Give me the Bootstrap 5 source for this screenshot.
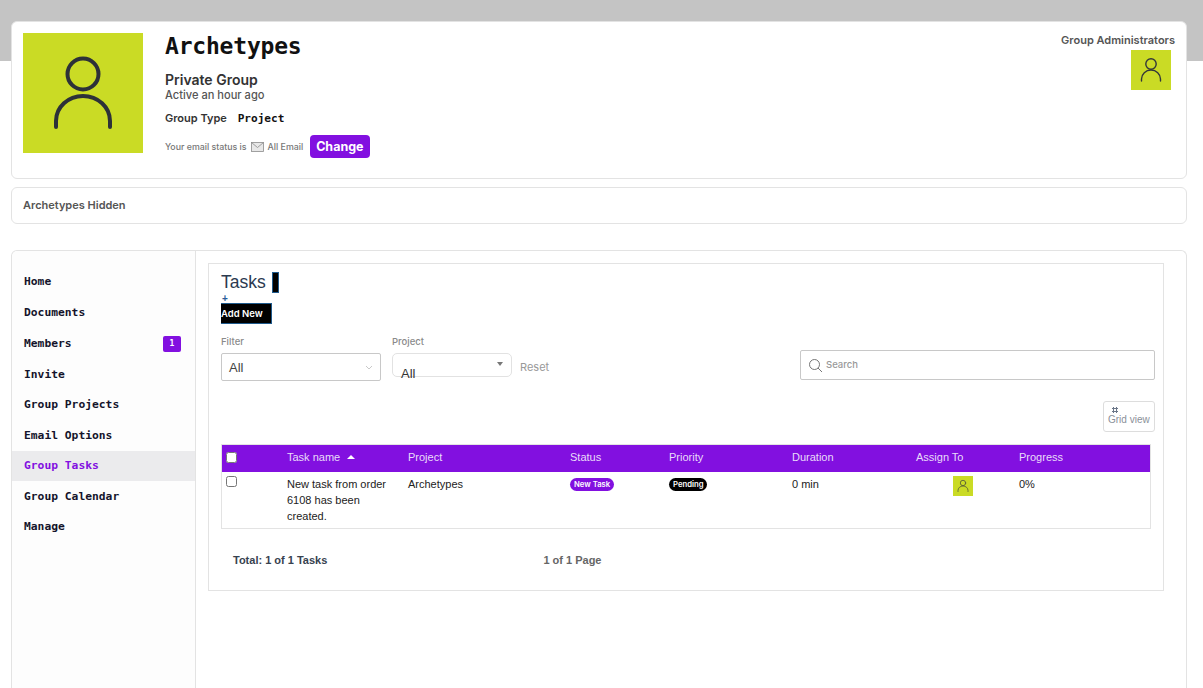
<!DOCTYPE html>
<html lang="en">
<head>
  <meta charset="UTF-8" />
  <meta name="viewport" content="width=device-width, initial-scale=1.0"/>
  <title>Archetypes Tasks</title>
  <link href="https://cdn.jsdelivr.net/npm/bootstrap@5.3.0/dist/css/bootstrap.min.css" rel="stylesheet">
  <style>
    html, body { height: 100%; }
    body { background: linear-gradient(#c4c4c4 61px, #fff 61px); font-family: "Inter", sans-serif; color: #2f2f38; overflow: hidden; }
    .page-wrap { padding: 21px 16px 0 11px; height: 688px; overflow: hidden; display: flex; flex-direction: column; }
    .box { background: #fff; border: 1px solid #e3e3e3; border-radius: 6px; }
    .head-box { flex: none; height: 158px; padding: 11px; margin-bottom: 8px; }
    .avatar-big { width: 120px; height: 120px; background: #cadb25; flex-shrink: 0; margin-right: 22px; }
    .avatar-mid { width: 40px; height: 40px; background: #cadb25; display: block; }
    .avatar-tiny { width: 20px; height: 20px; background: #cadb25; display: block; margin-left: 37px; }
    .group-title { font: 700 23px/26px "DejaVu Sans Mono", monospace; color: #111; letter-spacing: -.2px; margin: 0 0 13px; }
    .group-sub { font-size: 14px; font-weight: 600; line-height: 16px; color: #333; }
    .group-active { font-size: 11.1px; font-weight: 500; line-height: 14px; color: #555; margin-bottom: 9px; }
    .group-type { font-size: 11px; font-weight: 600; color: #333; line-height: 14px; margin-bottom: 9px; }
    .group-type span { font: 700 11.1px/14px "DejaVu Sans Mono", monospace; color: #111; margin-left: 8px; }
    .mail-line { font-size: 8.8px; font-weight: 500; color: #777; }
    .btn-change { background: #8210e0; color: #fff; font-size: 12.5px; font-weight: 700; line-height: 17px; padding: 3px 6px; border: 0; border-radius: 4px; margin-left: 7px; }
    .admins-title { font-size: 11px; font-weight: 600; color: #555; line-height: 14px; margin-bottom: 3px; }
    .hidden-box { flex: none; height: 37px; padding: 0 11px; margin-bottom: 26px; font-size: 11px; font-weight: 600; color: #555; }
    .main-box { flex: 1 0 auto; border-bottom: 0; border-radius: 6px 6px 0 0; }
    .side-col { width: 184px; flex-shrink: 0; background: #fdfdfd; border-right: 1px solid #e3e3e3; padding-top: 16px; border-top-left-radius: 6px; }
    .side-link { display: flex; justify-content: space-between; align-items: center; height: 30.4px; padding: 0 14px 0 12px; font: 700 11.3px/14px "DejaVu Sans Mono", monospace; color: #14142b; text-decoration: none; }
    .side-link.tall { height: 32px; }
    .side-link.now { background: #ebebed; color: #8210e0; }
    .side-count { background: #8210e0; color: #fff; border-radius: 2px; width: 18px; height: 16px; font-size: 8px; line-height: 16px; text-align: center; }
    .content-col { flex: 1; padding: 12px 22px 0 12px; }
    .panel-box { border: 1px solid #e3e3e3; height: 328px; padding: 6px 8px 0 12px; }
    .tasks-head { font: 400 17.5px/24px "Liberation Sans", sans-serif; color: #2b3a4f; height: 25px; }
    .black-tag { display: inline-block; width: 7px; height: 21px; background: #000; border: 1px solid #1f5a8c; vertical-align: -5px; margin-left: 1px; }
    .plus-mark { font: 700 10px/8px "Liberation Sans", sans-serif; color: #2a5c9a; height: 8px; margin-left: 1px; }
    .btn-addnew { display: block; width: 51px; height: 21px; background: #000; color: #fff; font-size: 9.5px; font-weight: 600; line-height: 19px; padding: 0; border: 1px solid #1f5a8c; border-left: 0; border-radius: 0; text-align: left; }
    .filter-row { margin-top: 12px; height: 45px; }
    .filter-label { font-size: 9.5px; font-weight: 500; line-height: 12px; color: #8a8a8a; margin-bottom: 5px; }
    .filter-gap { margin-right: 11px; }
    .pick-one { width: 160px; height: 28px; border: 1px solid #c8c8c8; border-radius: 2px; padding: 0 7px; font: 13px/27px "Liberation Sans", sans-serif; color: #444; display: flex; justify-content: space-between; }
    .pick-two { width: 120px; height: 24px; border: 1px solid #e2e2e2; border-radius: 5px; padding: 0 8px; font: 13px/40px "Liberation Sans", sans-serif; color: #333; display: flex; justify-content: space-between; }
    .pick-two i { width: 0; height: 0; border: 3px solid transparent; border-top: 4px solid #777; margin-top: 8px; }
    .reset-link { font: 11px/28px "Inter", sans-serif; color: #999; margin-left: 8px; }
    .search-box { width: 355px; height: 30px; border: 1px solid #c8c8c8; border-radius: 2px; padding: 0 7px; font-size: 9.5px; font-weight: 500; color: #999; gap: 3px; margin-bottom: 1px; }
    .grid-btn { width: 52px; height: 31px; border: 1px solid #ddd; border-radius: 3px; font: 10px/11px "Liberation Sans", sans-serif; color: #8a9099; padding: 5px 4px 0; }
    .grid-dots { display: block; width: 6px; height: 6px; margin: 0 0 1px 4px; background: radial-gradient(circle, #6b7688 1.1px, transparent 1.3px) 0 0 / 3px 3px; }
    .tool-row { margin-top: 20px; height: 43px; }
    .task-frame { width: 930px; border: 1px solid #e3e3e3; }
    .task-table { table-layout: fixed; width: 928px; margin: 0; font: 11px/16px "Liberation Sans", sans-serif; color: #222; }
    .task-table th { background: #8210e0; color: #e9dcf9; font-weight: 400; height: 27px; padding: 0 4px 3px; vertical-align: middle; border: 0; }
    .task-table td { height: 56px; padding: 4px; vertical-align: top; border: 0; color: #222; }
    .task-table input { width: 11px; height: 11px; margin: 0; display: block; }
    .sort-up { display: inline-block; width: 0; height: 0; border: 4px solid transparent; border-top: 0; border-bottom: 4px solid #fff; margin-left: 4px; vertical-align: 2px; }
    .pill-tag { display: inline-block; font: 600 7.7px/13px "Inter", sans-serif; color: #fff; border-radius: 7px; padding: 0 4px; vertical-align: top; margin-top: 2px; }
    .pill-new { background: #8210e0; }
    .pill-pending { background: #000; }
    .foot-row { font: 700 11px/14px "Liberation Sans", sans-serif; margin-top: 24px; padding-left: 12px; color: #37424f; }
    .foot-row .pages { margin-left: 213px; color: #666; }
  </style>
</head>
<body>
  <div class="page-wrap">

    <!-- Group header -->
    <div class="box head-box d-flex">
      <svg class="avatar-big" viewBox="0 0 120 120" fill="none" stroke="#2d3138" stroke-width="4" stroke-linecap="round">
        <circle cx="60" cy="41" r="15.5"/>
        <path d="M33 94V88a27 25 0 0 1 54 0v6"/>
      </svg>
      <div class="flex-grow-1">
        <h1 class="group-title">Archetypes</h1>
        <div class="group-sub">Private Group</div>
        <div class="group-active">Active an hour ago</div>
        <div class="group-type">Group Type <span>Project</span></div>
        <div class="mail-line d-flex align-items-center">
          Your email status is
          <svg class="mx-1" width="13" height="10" viewBox="0 0 13 10" fill="#e8e8e8" stroke="#8c8c8c" stroke-width=".8"><rect x=".5" y=".5" width="12" height="9"/><path d="M.5 .5l6 5 6-5" fill="none"/></svg>
          All Email
          <button class="btn btn-change" type="button">Change</button>
        </div>
      </div>
      <div class="d-flex flex-column align-items-end">
        <div class="admins-title">Group Administrators</div>
        <svg class="avatar-mid me-1" viewBox="0 0 40 40" fill="none" stroke="#33373a" stroke-width="1.4" stroke-linecap="round">
          <circle cx="20" cy="14" r="5.2"/>
          <path d="M10.5 31v-2a9.5 9 0 0 1 19 0v2"/>
        </svg>
      </div>
    </div>

    <div class="box hidden-box d-flex align-items-center">Archetypes Hidden</div>

    <!-- Sidebar and tasks -->
    <div class="box main-box d-flex">
      <nav class="side-col">
        <a class="side-link" href="#">Home</a>
        <a class="side-link" href="#">Documents</a>
        <a class="side-link tall" href="#">Members <span class="side-count">1</span></a>
        <a class="side-link" href="#">Invite</a>
        <a class="side-link" href="#">Group Projects</a>
        <a class="side-link" href="#">Email Options</a>
        <a class="side-link now" href="#">Group Tasks</a>
        <a class="side-link" href="#">Group Calendar</a>
        <a class="side-link" href="#">Manage</a>
      </nav>

      <div class="content-col">
        <div class="panel-box">
          <div class="tasks-head">Tasks <span class="black-tag"></span></div>
          <div class="plus-mark">+</div>
          <button class="btn btn-addnew" type="button">Add New</button>

          <div class="filter-row d-flex">
            <div class="filter-gap">
              <div class="filter-label">Filter</div>
              <div class="pick-one">All
                <svg width="8" height="26" viewBox="0 0 8 26" fill="none" stroke="#bbb" stroke-width=".8"><path d="M1 12l3 3 3-3"/></svg>
              </div>
            </div>
            <div>
              <div class="filter-label">Project</div>
              <div class="d-flex">
                <div class="pick-two">All<i></i></div>
                <span class="reset-link">Reset</span>
              </div>
            </div>
            <div class="search-box d-flex align-items-center ms-auto align-self-end">
              <svg width="15" height="15" viewBox="0 0 15 15" fill="none" stroke="#666" stroke-width=".9"><circle cx="6.5" cy="6.5" r="5"/><path d="M10 10l4 4"/></svg>
              Search
            </div>
          </div>

          <div class="tool-row d-flex justify-content-end">
            <div class="grid-btn"><span class="grid-dots"></span>Grid view</div>
          </div>

          <div class="task-frame">
            <table class="table task-table">
              <colgroup>
                <col style="width:61px"><col style="width:121px"><col style="width:162px"><col style="width:99px">
                <col style="width:123px"><col style="width:124px"><col style="width:103px"><col style="width:135px">
              </colgroup>
              <thead>
                <tr>
                  <th><input type="checkbox"></th>
                  <th>Task name <span class="sort-up"></span></th>
                  <th>Project</th>
                  <th>Status</th>
                  <th>Priority</th>
                  <th>Duration</th>
                  <th>Assign To</th>
                  <th>Progress</th>
                </tr>
              </thead>
              <tbody>
                <tr>
                  <td><input type="checkbox"></td>
                  <td>New task from order 6108 has been created.</td>
                  <td>Archetypes</td>
                  <td><span class="pill-tag pill-new">New Task</span></td>
                  <td><span class="pill-tag pill-pending">Pending</span></td>
                  <td>0 min</td>
                  <td>
                    <svg class="avatar-tiny" viewBox="0 0 20 20" fill="none" stroke="#50553a" stroke-width=".8" stroke-linecap="round">
                      <circle cx="10" cy="7" r="2.7"/>
                      <path d="M5 15.5v-1a5 4.5 0 0 1 10 0v1"/>
                    </svg>
                  </td>
                  <td>0%</td>
                </tr>
              </tbody>
            </table>
          </div>

          <div class="foot-row">Total: 1 of 1 Tasks <span class="pages">1 of 1 Page</span></div>
        </div>
      </div>
    </div>
  </div>
  <script src="https://cdn.jsdelivr.net/npm/bootstrap@5.3.0/dist/js/bootstrap.bundle.min.js"></script>
</body>
</html>
